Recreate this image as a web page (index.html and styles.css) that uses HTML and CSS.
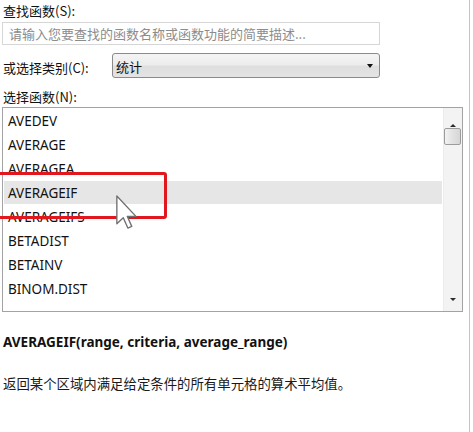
FILE: index.html
```html
<!DOCTYPE html>
<html lang="zh-CN">
<head>
<meta charset="utf-8">
<link rel="stylesheet" href="styles.css">
</head>
<body>
<div class="page">
  <div class="label first">查找函数(S):</div>
  <div class="search">请输入您要查找的函数名称或函数功能的简要描述...</div>
  <div class="cat-row">
    <div class="cat-label">或选择类别(C):</div>
    <div class="select">
      <span class="select-text">统计</span>
      <span class="select-arrow"></span>
    </div>
  </div>
  <div class="label third">选择函数(N):</div>
  <div class="list">
    <div class="items">
      <div class="item">AVEDEV</div>
      <div class="item">AVERAGE</div>
      <div class="item">AVERAGEA</div>
      <div class="item selected">AVERAGEIF</div>
      <div class="item">AVERAGEIFS</div>
      <div class="item">BETADIST</div>
      <div class="item">BETAINV</div>
      <div class="item">BINOM.DIST</div>
    </div>
    <div class="scrollbar">
      <div class="sb-btn sb-up"><span class="tri-up"></span></div>
      <div class="thumb"></div>
      <div class="sb-track"></div>
      <div class="sb-btn sb-down"><span class="tri-down"></span></div>
    </div>
  </div>
  <div class="syntax">AVERAGEIF(range, criteria, average_range)</div>
  <div class="desc">返回某个区域内满足给定条件的所有单元格的算术平均值。</div>

  <div class="highlight-box"></div>
  <svg class="cursor" width="22" height="34" viewBox="0 0 13 20">
    <path d="M0.5,0.5 L0.5,17 L4.3,13.4 L7,19.5 L9.3,18.5 L6.7,12.6 L11.8,12.6 Z" fill="#ffffff" stroke="#707070" stroke-width="0.8" stroke-linejoin="round"/>
  </svg>
</div>
</body>
</html>
```
FILE: styles.css
```css
html, body {
  margin: 0;
  padding: 0;
  background: #ffffff;
}
body {
  font-family: "Noto Sans", "Noto Sans CJK SC", sans-serif;
  color: #1a1a1a;
  font-size: 13px;
}
.page {
  position: relative;
  width: 470px;
  height: 432px;
  border-right: 1px solid #c4c4c4;
  padding-left: 2px;
  box-sizing: border-box;
  overflow: hidden;
}
.label {
  padding-left: 1px;
  font-family: "Noto Sans CJK SC", sans-serif;
  font-size: 13px;
  color: #111;
}
.label.first {
  height: 20px;
  line-height: 22px;
}
.search {
  margin-top: 2px;
  width: 378px;
  height: 23px;
  box-sizing: border-box;
  border: 1px solid #d6d6d6;
  padding-left: 6px;
  line-height: 21px;
  color: #8c8c8c;
  font-family: "Noto Sans CJK SC", sans-serif;
  font-size: 13px;
  white-space: nowrap;
  overflow: hidden;
}
.cat-row {
  margin-top: 8px;
  display: flex;
  align-items: center;
  height: 25px;
}
.cat-label {
  width: 109px;
  padding-left: 1px;
  padding-top: 3px;
  font-family: "Noto Sans CJK SC", sans-serif;
  color: #111;
}
.select {
  width: 268px;
  height: 25px;
  box-sizing: border-box;
  border: 1px solid #8a8a8a;
  border-radius: 3px;
  background: linear-gradient(#f4f4f4 0%, #ececec 48%, #dedede 52%, #e4e4e4 100%);
  display: flex;
  align-items: center;
  justify-content: space-between;
  padding: 0 6px 0 3px;
}
.select-text {
  font-family: "Noto Sans CJK SC", sans-serif;
  padding-top: 1px;
  color: #111;
}
.select-arrow {
  width: 0;
  height: 0;
  border-left: 3.5px solid transparent;
  border-right: 3.5px solid transparent;
  border-top: 4px solid #111;
}
.label.third {
  margin-top: 10px;
  height: 18px;
  line-height: 18px;
}
.list {
  margin-top: 1px;
  width: 461px;
  height: 205px;
  box-sizing: border-box;
  border: 1px solid #a3a3a3;
  display: flex;
}
.items {
  flex: 1;
  padding-left: 1px;
}
.item {
  height: 23px;
  margin: 1px 0;
  line-height: 25px;
  padding-left: 4px;
  font-size: 13.5px;
  color: #111;
  overflow: visible;
}
.item.selected {
  background: #e6e6e6;
  margin-right: 1px;
}
.scrollbar {
  width: 18px;
  background: #f3f3f3;
  border-left: 1px solid #ececec;
  display: flex;
  flex-direction: column;
}
.sb-btn {
  display: flex;
  justify-content: center;
}
.sb-up {
  height: 20px;
  align-items: flex-end;
  padding-bottom: 1px;
  box-sizing: border-box;
}
.sb-down {
  height: 20px;
  align-items: center;
  padding-bottom: 4px;
  box-sizing: border-box;
}
.tri-up {
  width: 0;
  height: 0;
  border-left: 3.5px solid transparent;
  border-right: 3.5px solid transparent;
  border-bottom: 3px solid #2a2a2a;
}
.tri-down {
  width: 0;
  height: 0;
  border-left: 3.5px solid transparent;
  border-right: 3.5px solid transparent;
  border-top: 3px solid #2a2a2a;
}
.thumb {
  height: 17px;
  margin: 0 1px 0 0;
  box-sizing: border-box;
  border: 1px solid #9c9c9c;
  border-radius: 2px;
  background: linear-gradient(90deg, #f2f2f2, #e2e2e2 50%, #d6d6d6);
}
.sb-track {
  flex: 1;
}
.syntax {
  margin-top: 22px;
  padding-left: 1px;
  line-height: 16px;
  font-weight: bold;
  font-size: 13.5px;
  color: #111;
}
.desc {
  margin-top: 25px;
  padding-left: 1px;
  line-height: 16px;
  font-family: "Noto Sans CJK SC", sans-serif;
  font-size: 13.4px;
  color: #1a1a1a;
}
.highlight-box {
  position: absolute;
  left: -4px;
  top: 172px;
  width: 171px;
  height: 47px;
  box-sizing: border-box;
  border: 3.5px solid #e2161d;
  border-radius: 3px;
}
.cursor {
  position: absolute;
  left: 116px;
  top: 195px;
}
```
